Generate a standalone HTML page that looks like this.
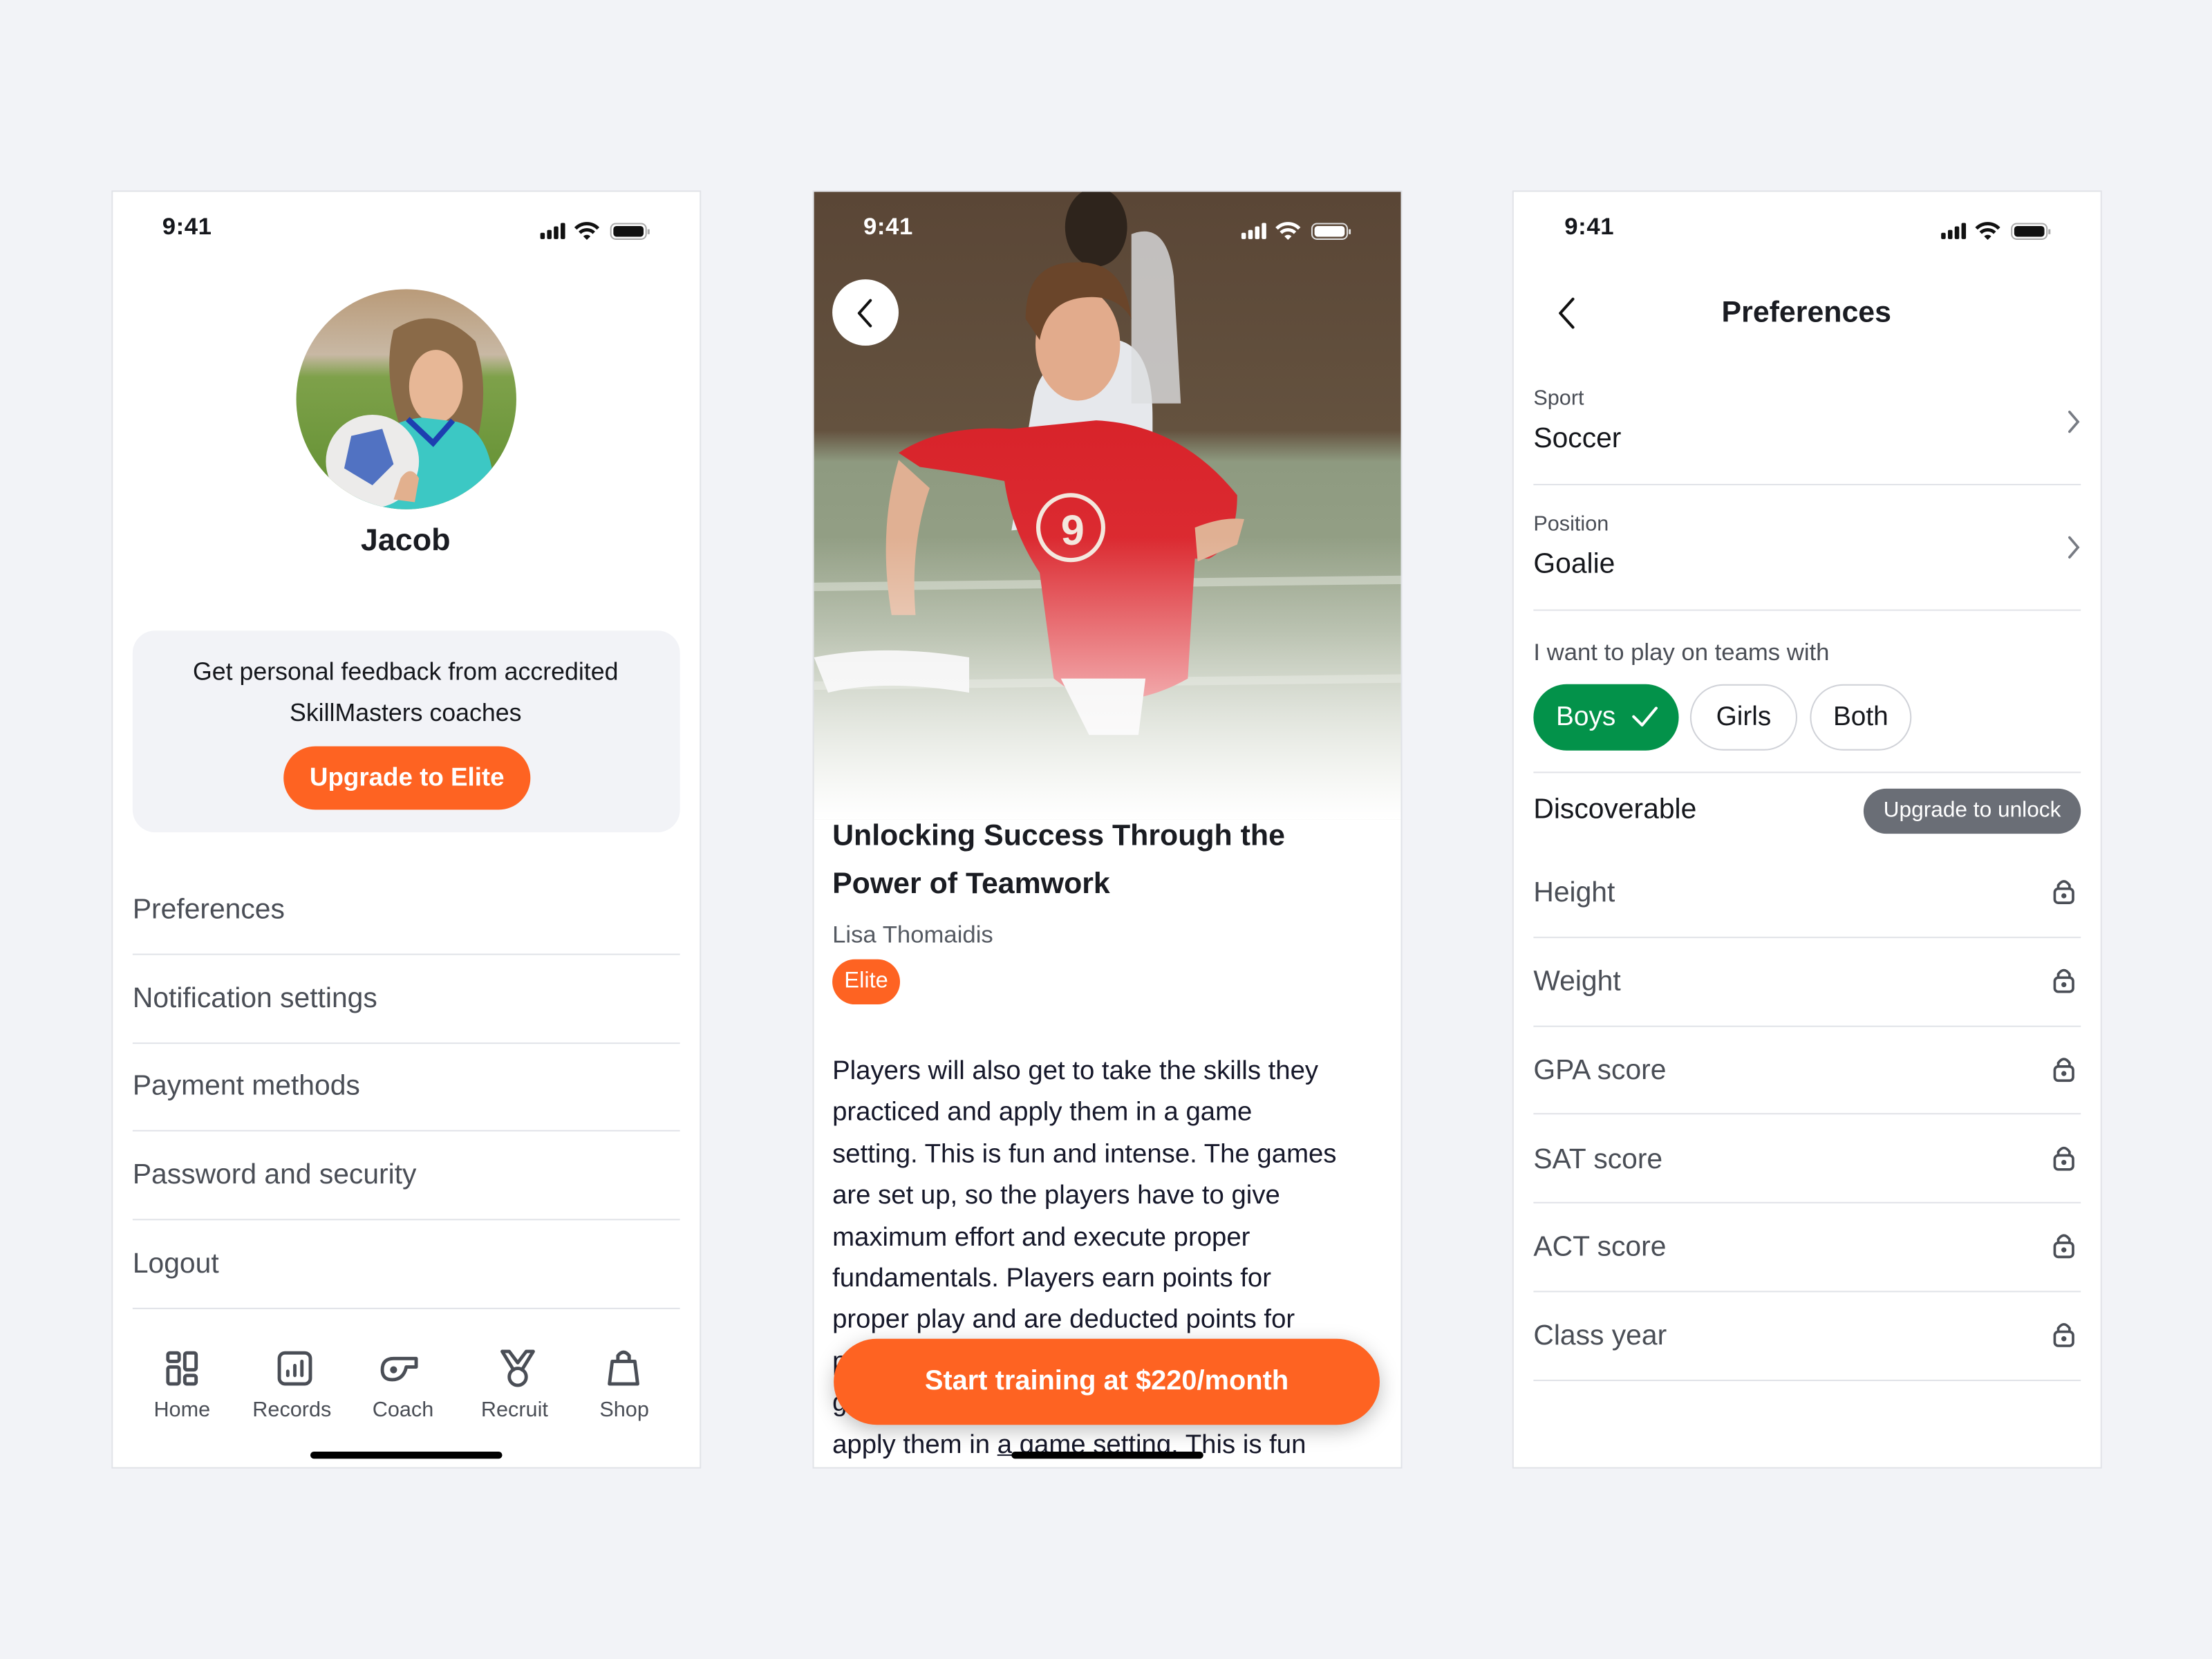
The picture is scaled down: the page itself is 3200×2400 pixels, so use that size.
<!DOCTYPE html>
<html><head><meta charset="utf-8">
<style>
*{margin:0;padding:0;box-sizing:border-box}
html,body{width:3200px;height:2400px;background:#f2f3f7;overflow:hidden}
#s{position:absolute;left:0;top:0;width:1568px;height:1176px;transform:scale(2.040816);transform-origin:0 0;font-family:"Liberation Sans",sans-serif;color:#15171c}
.ph{position:absolute;top:135px;width:418px;height:906px;background:#fff;border:1.5px solid #e1e3e8;overflow:hidden}
.t{position:absolute;white-space:nowrap;line-height:1}
.time{font-size:17px;font-weight:bold;top:152px;letter-spacing:.3px}
.hr{position:absolute;height:1.3px;background:#e1e3e8}
.g{color:#4a4e56}
</style></head><body><div id="s">

<!-- LEFT PHONE -->
<div class="ph" style="left:79px">
 <div class="t time" style="left:35px;top:16px">9:41</div>
 <svg style="position:absolute;left:302px;top:20px" width="80" height="16" viewBox="0 0 80 16">
  <rect x="1" y="9" width="3.2" height="4.5" rx="1" fill="#111"/><rect x="5.8" y="7" width="3.2" height="6.5" rx="1" fill="#111"/><rect x="10.6" y="4.5" width="3.2" height="9" rx="1" fill="#111"/><rect x="15.4" y="2" width="3.2" height="11.5" rx="1" fill="#111"/>
  <path d="M26 6 A11 11 0 0 1 42 6" stroke="#111" stroke-width="2.4" fill="none"/><path d="M29 9 A7 7 0 0 1 39 9" stroke="#111" stroke-width="2.4" fill="none"/><path d="M31.5 11.5 L34 14 L36.5 11.5 A3.5 3.5 0 0 0 31.5 11.5Z" fill="#111"/>
  <rect x="51" y="2.5" width="25" height="11" rx="3.5" fill="none" stroke="#aaa" stroke-width="1"/><rect x="52.8" y="4.2" width="21.4" height="7.6" rx="2.2" fill="#111"/><rect x="77" y="6.5" width="1.5" height="3.5" fill="#aaa"/>
 </svg>
 <svg style="position:absolute;left:129px;top:68px" width="158" height="158" viewBox="0 0 158 158">
  <defs><clipPath id="cc"><circle cx="79" cy="79" r="78"/></clipPath>
  <linearGradient id="ag" x1="0" y1="0" x2="0" y2="1"><stop offset="0" stop-color="#b99a78"/><stop offset=".3" stop-color="#c8b8a4"/><stop offset=".4" stop-color="#7ea14a"/><stop offset="1" stop-color="#5f8e2f"/></linearGradient></defs>
  <g clip-path="url(#cc)">
   <rect width="158" height="158" fill="url(#ag)"/>
   <path d="M70 30 Q100 10 128 38 Q138 70 130 105 L105 110 L75 100 Q62 60 70 30Z" fill="#8a6a48"/>
   <ellipse cx="100" cy="70" rx="19" ry="26" fill="#e7b796"/>
   <path d="M40 158 L48 120 Q60 95 90 92 L115 95 Q135 100 140 130 L145 158Z" fill="#3cc8c4"/>
   <path d="M80 93 L98 110 L112 94" stroke="#1d3fb0" stroke-width="4" fill="none"/>
   <circle cx="55" cy="123" r="33" fill="#ecebea"/>
   <path d="M40 105 L62 100 L70 125 L55 140 L35 128Z" fill="#2a54b8" opacity=".8"/>
   <path d="M75 135 Q82 125 88 135 L85 152 L70 150Z" fill="#e2b08e"/>
  </g>
 </svg>
 <div class="t" style="left:0;width:415px;text-align:center;top:236px;font-size:22px;font-weight:bold;color:#1a1c22">Jacob</div>
 <div style="position:absolute;left:14px;top:311px;width:388px;height:143px;background:#f2f3f7;border-radius:16px"></div>
 <div class="t" style="left:0;width:415px;text-align:center;top:332px;font-size:17.5px">Get personal feedback from accredited</div>
 <div class="t" style="left:0;width:415px;text-align:center;top:361px;font-size:17.5px">SkillMasters coaches</div>
 <div style="position:absolute;left:121px;top:393px;width:175px;height:45px;background:#fe6322;border-radius:23px;color:#fff;font-size:18px;font-weight:bold;text-align:center;line-height:45px">Upgrade to Elite</div>
 <div class="t g" style="left:14px;top:499px;font-size:20px">Preferences</div>
 <div class="hr" style="left:14px;width:388px;top:540px"></div>
 <div class="t g" style="left:14px;top:562px;font-size:20px">Notification settings</div>
 <div class="hr" style="left:14px;width:388px;top:603px"></div>
 <div class="t g" style="left:14px;top:624px;font-size:20px">Payment methods</div>
 <div class="hr" style="left:14px;width:388px;top:665px"></div>
 <div class="t g" style="left:14px;top:687px;font-size:20px">Password and security</div>
 <div class="hr" style="left:14px;width:388px;top:728px"></div>
 <div class="t g" style="left:14px;top:750px;font-size:20px">Logout</div>
 <div class="hr" style="left:14px;width:388px;top:791px"></div>
 <svg style="position:absolute;left:0;top:815px" width="415" height="40" viewBox="0 0 415 40" fill="none" stroke="#4a4e56" stroke-width="2.4" stroke-linejoin="round" stroke-linecap="round">
  <rect x="39" y="8" width="8" height="6" rx="1.5"/><rect x="39" y="18" width="8" height="12" rx="1.5"/><rect x="51" y="8" width="8" height="12" rx="1.5"/><rect x="51" y="24" width="8" height="6" rx="1.5"/>
  <rect x="118" y="8" width="22" height="22" rx="4"/><path d="M124 24v-3M129 24v-7M134 24v-10"/>
  <path d="M198 27 Q191 27 191 20 Q191 12 199 12 L215 12 L215 18 L208 18 Q206 27 198 27Z"/><circle cx="199" cy="20" r="1.3" fill="#4a4e56"/>
  <path d="M276 7 L281 7 L287 15 L293 7 L298 7 L290 20 M276 7 L284 20"/><circle cx="287" cy="25" r="6"/>
  <path d="M354 14 L370 14 L372 30 L352 30Z M358 14 V10 Q362 5 366 10 V14"/>
 </svg>
 <div class="t g" style="left:29px;top:856px;font-size:15px">Home</div>
 <div class="t g" style="left:99px;top:856px;font-size:15px">Records</div>
 <div class="t g" style="left:184px;top:856px;font-size:15px">Coach</div>
 <div class="t g" style="left:261px;top:856px;font-size:15px">Recruit</div>
 <div class="t g" style="left:345px;top:856px;font-size:15px">Shop</div>
 <div style="position:absolute;left:140px;top:893px;width:136px;height:4.5px;border-radius:3px;background:#000"></div>
</div>

<!-- MIDDLE PHONE -->
<div class="ph" style="left:576px">
 <svg style="position:absolute;left:0;top:0" width="418" height="445" viewBox="0 0 418 445">
  <defs>
   <linearGradient id="bg1" x1="0" y1="0" x2="0" y2="1"><stop offset="0" stop-color="#5a4636"/><stop offset=".38" stop-color="#64523f"/><stop offset=".43" stop-color="#8e9a80"/><stop offset=".7" stop-color="#98a48a"/><stop offset="1" stop-color="#c7cdbd"/></linearGradient>
   <linearGradient id="fade" x1="0" y1="0" x2="0" y2="1"><stop offset=".55" stop-color="#fff" stop-opacity="0"/><stop offset="1" stop-color="#fff" stop-opacity="1"/></linearGradient>
   <linearGradient id="red" x1="0" y1="0" x2="0" y2="1"><stop offset="0" stop-color="#d8232a"/><stop offset="1" stop-color="#e0343a"/></linearGradient>
  </defs>
  <rect width="418" height="445" fill="url(#bg1)"/>
  <path d="M0 280 L418 275" stroke="#d5dacd" stroke-width="6" opacity=".6"/>
  <path d="M0 350 L418 345" stroke="#d5dacd" stroke-width="6" opacity=".5"/>
  <ellipse cx="200" cy="25" rx="22" ry="28" fill="#2e241c"/>
  <path d="M155 150 Q160 110 215 105 Q240 110 240 160 L240 230 L140 240Z" fill="#e6e8ec"/>
  <path d="M225 30 Q250 20 255 60 L260 150 L225 150Z" fill="#dcdde0" opacity=".8"/>
  <path d="M0 330 Q50 320 110 330 L110 355 Q50 345 10 355Z" fill="#eee"/>
  <path d="M60 185 Q90 165 140 168 L200 162 Q260 165 300 215 Q300 250 280 260 L270 260 L265 345 Q230 365 190 360 L170 345 L160 270 Q140 240 135 205 Q110 200 75 195Z" fill="url(#red)"/>
  <path d="M60 190 Q45 240 55 300 L72 300 Q68 250 82 210Z" fill="#e0b093"/>
  <path d="M270 238 Q290 230 305 232 L300 250 L272 262Z" fill="#e0b093"/>
  <ellipse cx="187" cy="108" rx="30" ry="40" fill="#e2ab8c"/>
  <path d="M150 90 Q150 50 185 50 Q220 48 225 90 Q215 72 190 75 Q165 78 160 105Z" fill="#6a452a"/>
  <circle cx="182" cy="238" r="23" fill="none" stroke="#f3e7dd" stroke-width="3"/>
  <text x="175" y="250" font-size="30" font-weight="bold" fill="#f3e7dd" font-family="Liberation Sans">9</text>
  <path d="M175 345 L235 345 L230 385 L195 385Z" fill="#f0eeee"/>
  <rect width="418" height="445" fill="url(#fade)"/>
 </svg>
 <div class="t time" style="left:35px;top:16px;color:#fff">9:41</div>
 <svg style="position:absolute;left:302px;top:20px" width="80" height="16" viewBox="0 0 80 16">
  <rect x="1" y="9" width="3.2" height="4.5" rx="1" fill="#fff"/><rect x="5.8" y="7" width="3.2" height="6.5" rx="1" fill="#fff"/><rect x="10.6" y="4.5" width="3.2" height="9" rx="1" fill="#fff"/><rect x="15.4" y="2" width="3.2" height="11.5" rx="1" fill="#fff"/>
  <path d="M26 6 A11 11 0 0 1 42 6" stroke="#fff" stroke-width="2.4" fill="none"/><path d="M29 9 A7 7 0 0 1 39 9" stroke="#fff" stroke-width="2.4" fill="none"/><path d="M31.5 11.5 L34 14 L36.5 11.5 A3.5 3.5 0 0 0 31.5 11.5Z" fill="#fff"/>
  <rect x="51" y="2.5" width="25" height="11" rx="3.5" fill="none" stroke="#ddd" stroke-width="1"/><rect x="52.8" y="4.2" width="21.4" height="7.6" rx="2.2" fill="#fff"/><rect x="77" y="6.5" width="1.5" height="3.5" fill="#ddd"/>
 </svg>
 <div style="position:absolute;left:13px;top:62px;width:47px;height:47px;border-radius:50%;background:#fff"></div>
 <svg style="position:absolute;left:27px;top:75px" width="20" height="22" viewBox="0 0 20 22"><path d="M13 2 L5 11 L13 20" stroke="#111" stroke-width="2" fill="none" stroke-linecap="round" stroke-linejoin="round"/></svg>
 <div class="t" style="left:13px;top:446px;font-size:21px;font-weight:bold;color:#1a1c22">Unlocking Success Through the</div>
 <div class="t" style="left:13px;top:480px;font-size:21px;font-weight:bold;color:#1a1c22">Power of Teamwork</div>
 <div class="t g" style="left:13px;top:518px;font-size:17px;color:#555a62">Lisa Thomaidis</div>
 <div style="position:absolute;left:13px;top:544px;width:48px;height:32px;border-radius:16px;background:#fe6322;color:#fff;font-size:16px;line-height:32px;text-align:center">Elite</div>
 <div style="position:absolute;left:13px;top:608px;font-size:18.8px;line-height:29.4px;white-space:nowrap;color:#16182a">
  Players will also get to take the skills they<br>practiced and apply them in a game<br>setting. This is fun and intense. The games<br>are set up, so the players have to give<br>maximum effort and execute proper<br>fundamentals. Players earn points for<br>proper play and are deducted points for<br>poor play and mistakes. Players will also<br>get to take the skills they practiced and<br>apply them in <span style="text-decoration:underline">a game setting.</span> This is fun
 </div>
 <div style="position:absolute;left:14px;top:813px;width:387px;height:61px;border-radius:31px;background:#fe6322;color:#fff;font-size:19.5px;font-weight:bold;text-align:center;line-height:61px;box-shadow:0 4px 14px rgba(0,0,0,.25)">Start training at $220/month</div>
 <div style="position:absolute;left:140px;top:893px;width:136px;height:4.5px;border-radius:3px;background:#000"></div>
</div>

<!-- RIGHT PHONE -->
<div class="ph" style="left:1072px">
 <div class="t time" style="left:36px;top:16px">9:41</div>
 <svg style="position:absolute;left:302px;top:20px" width="80" height="16" viewBox="0 0 80 16">
  <rect x="1" y="9" width="3.2" height="4.5" rx="1" fill="#111"/><rect x="5.8" y="7" width="3.2" height="6.5" rx="1" fill="#111"/><rect x="10.6" y="4.5" width="3.2" height="9" rx="1" fill="#111"/><rect x="15.4" y="2" width="3.2" height="11.5" rx="1" fill="#111"/>
  <path d="M26 6 A11 11 0 0 1 42 6" stroke="#111" stroke-width="2.4" fill="none"/><path d="M29 9 A7 7 0 0 1 39 9" stroke="#111" stroke-width="2.4" fill="none"/><path d="M31.5 11.5 L34 14 L36.5 11.5 A3.5 3.5 0 0 0 31.5 11.5Z" fill="#111"/>
  <rect x="51" y="2.5" width="25" height="11" rx="3.5" fill="none" stroke="#aaa" stroke-width="1"/><rect x="52.8" y="4.2" width="21.4" height="7.6" rx="2.2" fill="#111"/><rect x="77" y="6.5" width="1.5" height="3.5" fill="#aaa"/>
 </svg>
 <svg style="position:absolute;left:28px;top:74px" width="20" height="24" viewBox="0 0 20 24"><path d="M14 2 L5 12 L14 22" stroke="#111" stroke-width="2" fill="none" stroke-linecap="round" stroke-linejoin="round"/></svg>
 <div class="t" style="left:0;width:415px;text-align:center;top:75px;font-size:21px;font-weight:bold;color:#1a1c22">Preferences</div>

 <div class="t g" style="left:14px;top:139px;font-size:15px">Sport</div>
 <div class="t" style="left:14px;top:165px;font-size:20px">Soccer</div>
 <svg style="position:absolute;left:390px;top:153px" width="14" height="20" viewBox="0 0 14 20"><path d="M4 3 L10 10 L4 17" stroke="#777b83" stroke-width="1.8" fill="none" stroke-linecap="round"/></svg>
 <div class="hr" style="left:14px;width:388px;top:207px"></div>
 <div class="t g" style="left:14px;top:228px;font-size:15px">Position</div>
 <div class="t" style="left:14px;top:254px;font-size:20px">Goalie</div>
 <svg style="position:absolute;left:390px;top:242px" width="14" height="20" viewBox="0 0 14 20"><path d="M4 3 L10 10 L4 17" stroke="#777b83" stroke-width="1.8" fill="none" stroke-linecap="round"/></svg>
 <div class="hr" style="left:14px;width:388px;top:296px"></div>
 <div class="t g" style="left:14px;top:318px;font-size:17px">I want to play on teams with</div>
 <div style="position:absolute;left:14px;top:349px;width:103px;height:47px;border-radius:24px;background:#03924a"></div>
 <div class="t" style="left:30px;top:363px;font-size:19px;color:#fff">Boys</div>
 <svg style="position:absolute;left:82px;top:362px" width="22" height="20" viewBox="0 0 22 20"><path d="M3 10 L9 16 L19 4" stroke="#fff" stroke-width="2" fill="none" stroke-linecap="round" stroke-linejoin="round"/></svg>
 <div style="position:absolute;left:125px;top:349px;width:76px;height:47px;border-radius:24px;border:1.3px solid #d0d2d8;font-size:19px;text-align:center;line-height:45px">Girls</div>
 <div style="position:absolute;left:210px;top:349px;width:72px;height:47px;border-radius:24px;border:1.3px solid #d0d2d8;font-size:19px;text-align:center;line-height:45px">Both</div>
 <div class="hr" style="left:14px;width:388px;top:411px"></div>
 <div class="t" style="left:14px;top:428px;font-size:20px">Discoverable</div>
 <div style="position:absolute;left:248px;top:423px;width:154px;height:32px;border-radius:16px;background:#6a6e76;color:#fff;font-size:15.5px;text-align:center;line-height:32px">Upgrade to unlock</div>

 <div class="t g" style="left:14px;top:487px;font-size:20px">Height</div>
 <div class="hr" style="left:14px;width:388px;top:528px"></div>
 <div class="t g" style="left:14px;top:550px;font-size:20px">Weight</div>
 <div class="hr" style="left:14px;width:388px;top:591px"></div>
 <div class="t g" style="left:14px;top:613px;font-size:20px">GPA score</div>
 <div class="hr" style="left:14px;width:388px;top:653px"></div>
 <div class="t g" style="left:14px;top:676px;font-size:20px">SAT score</div>
 <div class="hr" style="left:14px;width:388px;top:716px"></div>
 <div class="t g" style="left:14px;top:738px;font-size:20px">ACT score</div>
 <div class="hr" style="left:14px;width:388px;top:779px"></div>
 <div class="t g" style="left:14px;top:801px;font-size:20px">Class year</div>
 <div class="hr" style="left:14px;width:388px;top:842px"></div>
 <svg style="position:absolute;left:380px;top:486px" width="20" height="340" viewBox="0 0 20 340" fill="none" stroke="#4a4e56" stroke-width="1.8">
  <g id="lk"><rect x="3.5" y="8" width="13" height="10" rx="2.5"/><path d="M6 8 V5.5 Q10 0 14 5.5 V8"/><circle cx="10" cy="13" r=".9" fill="#4a4e56"/></g>
  <use href="#lk" y="63"/><use href="#lk" y="126"/><use href="#lk" y="189"/><use href="#lk" y="251"/><use href="#lk" y="314"/>
 </svg>
</div>

</div></body></html>
